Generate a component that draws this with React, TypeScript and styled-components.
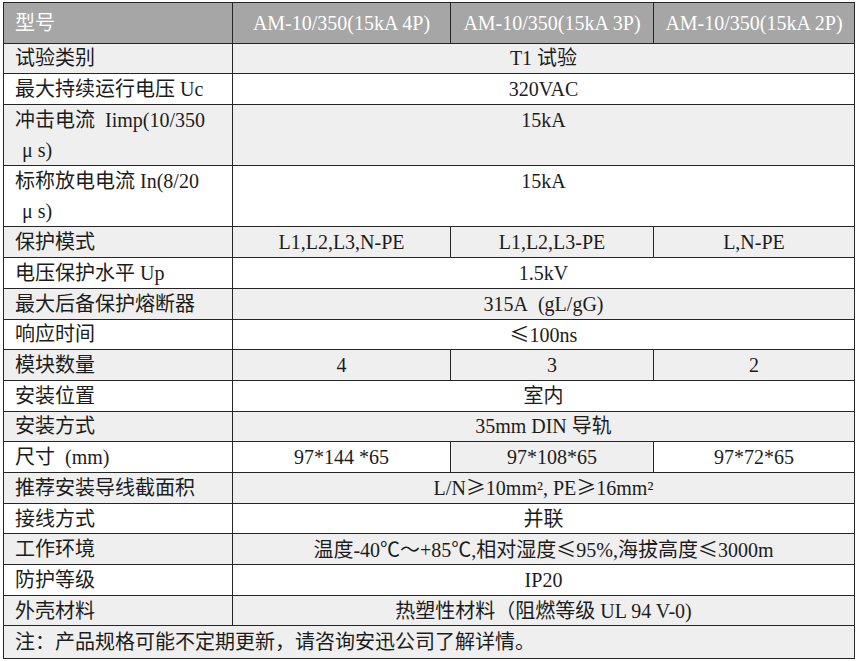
import React from 'react'
import styled, { createGlobalStyle } from 'styled-components'

const GlobalStyle = createGlobalStyle`
  body {
    margin: 0;
    background: #fff;
  }
`

const Page = styled.div`
  padding: 2px 0 0 3px;
`

const SpecTable = styled.table`
  border-collapse: collapse;
  table-layout: fixed;
  width: 851px;
  font-family: "Liberation Serif", "Noto Sans CJK SC", serif;
  font-size: 20px;
  line-height: 28px;
  color: #1c1c1c;
`

const HeadCell = styled.th<{ $left?: boolean }>`
  height: 39.5px;
  padding: 0 0 0 ${p => (p.$left ? '11px' : '0')};
  background: #a6a6a6;
  color: #fff;
  font-weight: normal;
  text-align: ${p => (p.$left ? 'left' : 'center')};
  white-space: nowrap;
  border: 1px solid #262626;
`

const Row = styled.tr<{ $tall?: boolean; $note?: boolean }>`
  height: ${p => (p.$tall ? '61.3px' : p.$note ? '33px' : '30.7px')};
`

const Label = styled.td<{ $shade?: boolean; $tall?: boolean }>`
  padding: 0 0 0 11px;
  background: ${p => (p.$shade ? '#efefef' : '#fff')};
  text-align: left;
  vertical-align: middle;
  line-height: ${p => (p.$tall ? '30px' : '28px')};
  white-space: nowrap;
  border: 1px solid #262626;
`

const Value = styled.td<{ $shade?: boolean; $top?: boolean }>`
  padding: ${p => (p.$top ? '1px 0 0' : '0')};
  background: ${p => (p.$shade ? '#efefef' : '#fff')};
  text-align: center;
  vertical-align: ${p => (p.$top ? 'top' : 'middle')};
  white-space: nowrap;
  border: 1px solid #262626;
`

const Sub = styled.span`
  padding-left: 7px;
`

/* full-width symbols (≤ ≥) drawn with the CJK face, as in the source sheet */
const Sym = styled.span`
  font-family: "Noto Sans CJK SC", sans-serif;
`

type Spec = {
  label: React.ReactNode
  values: React.ReactNode[]
  tall?: boolean
  shadeMiddle?: boolean
}

const specs: Spec[] = [
  { label: '试验类别', values: ['T1 试验'] },
  { label: '最大持续运行电压 Uc', values: ['320VAC'] },
  {
    label: <>冲击电流{'\u00a0'} Iimp(10/350<br /><Sub>μ s)</Sub></>,
    values: ['15kA'],
    tall: true,
  },
  {
    label: <>标称放电电流 In(8/20<br /><Sub>μ s)</Sub></>,
    values: ['15kA'],
    tall: true,
  },
  { label: '保护模式', values: ['L1,L2,L3,N-PE', 'L1,L2,L3-PE', 'L,N-PE'] },
  { label: '电压保护水平 Up', values: ['1.5kV'] },
  { label: '最大后备保护熔断器', values: ['315A\u00a0 (gL/gG)'] },
  { label: '响应时间', values: [<><Sym>≤</Sym>100ns</>] },
  { label: '模块数量', values: ['4', '3', '2'] },
  { label: '安装位置', values: ['室内'] },
  { label: '安装方式', values: ['35mm DIN 导轨'] },
  { label: '尺寸\u00a0 (mm)', values: ['97*144 *65', '97*108*65', '97*72*65'], shadeMiddle: true },
  { label: '推荐安装导线截面积', values: [<>L/N<Sym>≥</Sym>10mm², PE<Sym>≥</Sym>16mm²</>] },
  { label: '接线方式', values: ['并联'] },
  {
    label: '工作环境',
    values: [<>温度-40℃～+85℃,相对湿度<Sym>≤</Sym>95%,海拔高度<Sym>≤</Sym>3000m</>],
  },
  { label: '防护等级', values: ['IP20'] },
  { label: '外壳材料', values: ['热塑性材料（阻燃等级 UL 94 V-0)'] },
]

const models = ['AM-10/350(15kA 4P)', 'AM-10/350(15kA 3P)', 'AM-10/350(15kA 2P)']

const App: React.FunctionComponent = () => {
  return (
    <>
      <GlobalStyle />
      <Page>
        <SpecTable>
          <colgroup>
            <col style={{ width: 229 }} />
            <col style={{ width: 218 }} />
            <col style={{ width: 203 }} />
            <col style={{ width: 201 }} />
          </colgroup>
          <thead>
            <tr>
              <HeadCell $left>型号</HeadCell>
              {models.map(m => (
                <HeadCell key={m}>{m}</HeadCell>
              ))}
            </tr>
          </thead>
          <tbody>
            {specs.map((s, i) => {
              const shade = i % 2 === 0
              return (
                <Row key={i} $tall={s.tall}>
                  <Label $shade={shade} $tall={s.tall}>{s.label}</Label>
                  {s.values.length === 1 ? (
                    <Value colSpan={3} $shade={shade} $top={s.tall}>
                      {s.values[0]}
                    </Value>
                  ) : (
                    s.values.map((v, j) => (
                      <Value key={j} $shade={shade || (s.shadeMiddle && j === 1)}>
                        {v}
                      </Value>
                    ))
                  )}
                </Row>
              )
            })}
            <Row $note>
              <Label colSpan={4} $shade>
                注：产品规格可能不定期更新，请咨询安迅公司了解详情。
              </Label>
            </Row>
          </tbody>
        </SpecTable>
      </Page>
    </>
  )
}

export default App
